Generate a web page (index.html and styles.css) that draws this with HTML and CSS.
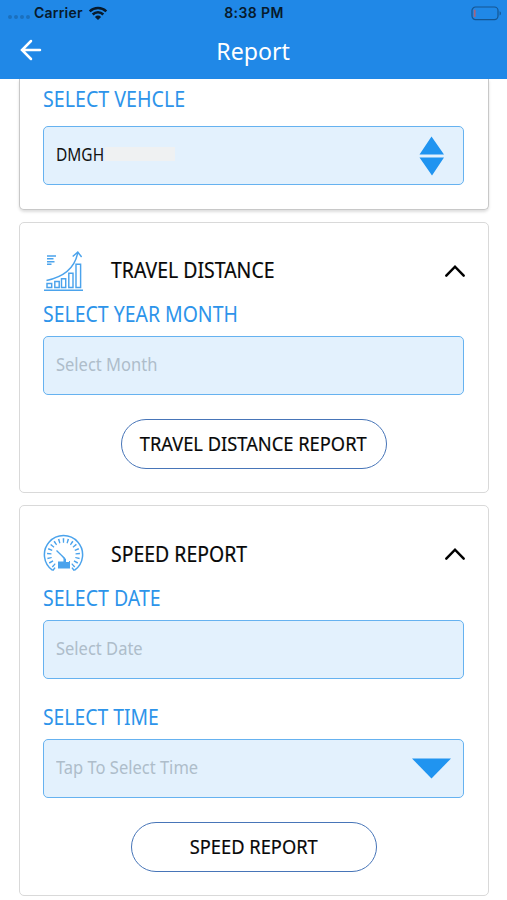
FILE: index.html
```
<!DOCTYPE html>
<html lang="en">
<head>
<meta charset="utf-8">
<meta name="viewport" content="width=device-width, initial-scale=1">
<title>Report</title>
<link rel="stylesheet" href="styles.css">
</head>
<body>
<header class="topbar">
  <div class="status">
    <div class="carrier">
      <span class="dots"><i></i><i></i><i></i><i></i></span>
      <span class="carrier-name">Carrier</span>
      <svg class="wifi" width="20" height="15" viewBox="0 0 20 15"><path d="M1.7 5.3a12 12 0 0 1 16.6 0M4.7 8.5a7.6 7.6 0 0 1 10.6 0" fill="none" stroke="#071a2c" stroke-width="2.5"/><path d="M6.9 10.9a4.4 4.4 0 0 1 6.2 0L10 14z" fill="#071a2c"/></svg>
    </div>
    <span class="clock">8:38 PM</span>
    <svg class="battery" width="31" height="15" viewBox="0 0 31 15"><rect x="1" y="1" width="26" height="12.6" rx="3.6" fill="none" stroke="#155591" stroke-width="1.2"/><path d="M28.6 5.3c1.8.6 1.8 3.6 0 4.2z" fill="#155591"/><rect x="2.8" y="3.6" width="1.8" height="7.5" rx=".9" fill="#a4647f"/></svg>
  </div>
  <div class="nav">
    <svg class="back" width="22" height="22" viewBox="0 0 22 22"><path d="M20 11H2.5M11 2L2 11l9 9" fill="none" stroke="#fff" stroke-width="2.5" stroke-linecap="round"/></svg>
    <h1><span class="t t-title">Report</span></h1>
  </div>
</header>
<main>
  <section class="card card-vehicle">
    <div class="label"><span class="t t-vehicle">SELECT VEHCLE</span></div>
    <div class="field">
      <span class="t t-plate">DMGH</span><span class="mask"></span>
      <svg class="updown" width="26" height="40" viewBox="0 0 26 40"><path d="M12.5 .5L25 18.5H.5zM.5 21.5H25L13 39.5z" fill="#2094f0"/></svg>
    </div>
  </section>
  <section class="card card-travel">
    <div class="heading">
      <svg class="icon" width="42" height="42" viewBox="0 0 42 42"><g fill="none" stroke="#4ba3ec" stroke-width="1.45"><path d="M1 40.3h39" /><path d="M4 37.5v-4h4.7v4zM11.8 37.5v-6h4.4v6zM18.5 37.5v-8.7h4.2v8.7zM25.8 37.5V23.3h4.2v14.2zM33 37.5V14.3h4.6v23.2z"/><path d="M3.5 30.5C20 27 31.5 19 34.7 3M29.7 6.5L34.8 2l3.8 5"/><path d="M4 6h9M4 8.8h6.5M4 11.8h7.5M4 14.3h4.5"/></g></svg>
      <h2><span class="t t-travel">TRAVEL DISTANCE</span></h2>
      <svg class="chevron" width="22" height="14" viewBox="0 0 22 14"><path d="M2.3 11.7L11 2.7l8.7 9" fill="none" stroke="#000" stroke-width="2.5" stroke-linecap="round"/></svg>
    </div>
    <div class="label"><span class="t t-month">SELECT YEAR MONTH</span></div>
    <div class="field hint"><span class="t t-hmonth">Select Month</span></div>
    <button class="btn"><span class="t t-btravel">TRAVEL DISTANCE REPORT</span></button>
  </section>
  <section class="card card-speed">
    <div class="heading">
      <svg class="icon" width="42" height="42" viewBox="0 -1 42 42"><g fill="none" stroke="#4ba3ec"><path d="M9.6 36.4A19.1 19.1 0 1 1 31.4 36.4" stroke-width="1.5"/><path d="M9.8 36.6l2.2-3M31.2 36.6l-2.2-3" stroke-width="1.5"/><path d="M11.3 31.75A14.3 14.3 0 1 1 29.7 31.75" stroke-width="4.4" stroke-dasharray="1.4 2.88" pathLength="69.9"/><path d="M13.5 16.5l8 7.8" stroke-width="1.3"/></g><path d="M18 21l5 4v3h3v-1h1v7.5H15V27.5h5.5v-3z" fill="#4ba3ec"/></svg>
      <h2><span class="t t-speed">SPEED REPORT</span></h2>
      <svg class="chevron" width="22" height="14" viewBox="0 0 22 14"><path d="M2.3 11.7L11 2.7l8.7 9" fill="none" stroke="#000" stroke-width="2.5" stroke-linecap="round"/></svg>
    </div>
    <div class="label"><span class="t t-date">SELECT DATE</span></div>
    <div class="field hint"><span class="t t-hdate">Select Date</span></div>
    <div class="label label-time"><span class="t t-time">SELECT TIME</span></div>
    <div class="field hint"><span class="t t-htime">Tap To Select Time</span>
      <svg class="down" width="39" height="21" viewBox="0 0 39 21"><path d="M0 .5h39L19.5 20.5z" fill="#2094f0"/></svg>
    </div>
    <button class="btn btn-speed"><span class="t t-bspeed">SPEED REPORT</span></button>
  </section>
</main>
</body>
</html>
```
FILE: styles.css
```
* { box-sizing: border-box; }
body { margin: 0; height: 900px; overflow: hidden; background: #fff; font-family: "Noto Sans", sans-serif; color: #080808; }
svg { display: block; flex: none; }
.topbar { height: 79px; background: #2088e7; }
.status { height: 26px; display: grid; grid-template-columns: 1fr auto 1fr; align-items: center; padding: 0 5px 0 8px; font: 600 14px/26px Inter, sans-serif; color: #071a2c; }
.carrier { display: flex; align-items: center; }
.carrier-name { letter-spacing: .2px; }
.dots { display: flex; gap: 2px; width: 26px; padding-top: 8px; }
.dots i { width: 4px; height: 4px; border-radius: 50%; background: #1b70bd; }
.wifi { margin-left: 5px; }
.clock { letter-spacing: .4px; margin-right: 2px; }
.battery { justify-self: end; }
.nav { height: 53px; display: grid; grid-template-columns: 40px 1fr 40px; align-items: center; padding: 0 20px; }
.back { margin-top: -5px; }
h1 { margin: 0; text-align: center; color: #fff; font-weight: 400; font-size: 24px; line-height: 49px; height: 53px; }
h2 { margin: 0; flex: 1; font-weight: 400; font-size: 21px; line-height: 30px; -webkit-text-stroke: .2px #080808; }
.t { display: inline-block; white-space: nowrap; transform-origin: 0 50%; }
main { padding: 0 18px 0 19px; }
.card { border: 1.5px solid #d9d9d9; border-radius: 5px; padding: 0 24px 0 23px; background: #fff; }
.card-vehicle { height: 131px; border-top: 0; border-color: #c8c8c8; border-radius: 0 0 5px 5px; padding-top: 5px; box-shadow: 0 2px 3px #0002; }
.card-travel { height: 271px; margin-top: 12px; padding-top: 27px; }
.card-speed { height: 391px; margin-top: 12px; padding-top: 27px; }
.label { height: 30px; line-height: 30px; font-size: 21px; color: #2d94ea; margin-bottom: 12px; }
.field { height: 59px; display: flex; align-items: center; border: 1.5px solid #66b2f0; border-radius: 5px; background: #e3f1fd; padding: 0 12px; font-size: 17.5px; line-height: 24px; color: #111; }
.field .t { margin-top: -3px; }
.hint { color: #aebdca; }
.mask { width: 70px; height: 14px; margin-top: -3px; background: #eff1f2; }
.updown { margin-left: auto; margin-right: 6px; }
.down { margin-left: auto; }
.heading { height: 42px; display: flex; align-items: center; }
.heading h2 { margin-left: 26px; }
.card-travel h2 { margin-top: -2px; }
.heading .chevron { margin-right: -1.5px; }
.card-travel .label, .card-speed .label { height: 26px; line-height: 26px; margin: 9px 0; }
.card-speed .label { margin: 10px 0 9px; }
.card-speed .label-time { margin: 25px 0 9px; }
.btn { display: flex; justify-content: center; align-items: center; width: 266px; height: 50px; margin: 24px auto 0; border: 1.5px solid #4775b8; border-radius: 25px; background: #fff; color: #080808; font: 400 20.5px/30px "Noto Sans", sans-serif; padding: 0 0 2px; -webkit-text-stroke: .2px #080808; }
.btn-speed { width: 246px; }
.btn .t { transform-origin: 50% 50%; }
.t-title { transform-origin: 50% 50%; transform: scaleX(.965); }
.t-vehicle { transform: scaleX(.935); }
.t-month, .t-speed, .t-travel { transform: scaleX(.926); }
.t-date { transform: scaleX(.93); }
.t-time { transform: scaleX(.92); }
.t-plate { transform: scaleX(.885); width: 49px; }
.t-hmonth, .t-hdate, .t-htime { transform: scaleX(.943); }
.t-btravel, .t-bspeed { transform: scaleX(.892); }
```
